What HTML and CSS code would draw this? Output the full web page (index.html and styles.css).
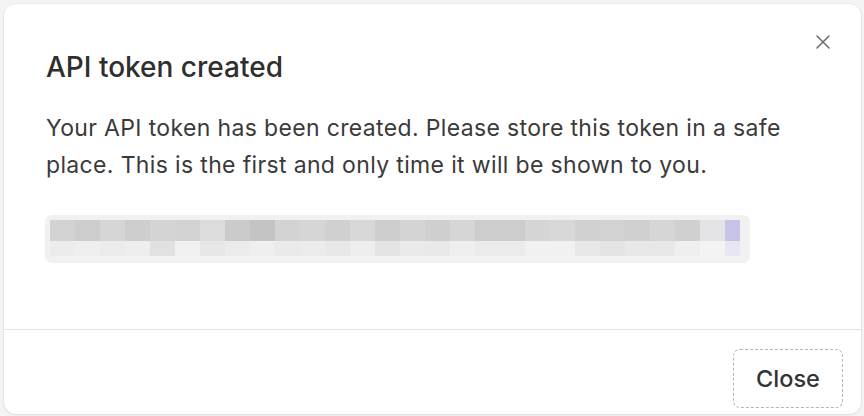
FILE: index.html
```html
<!DOCTYPE html>
<html lang="en">
<head>
<meta charset="utf-8">
<title>API token created</title>
<link rel="stylesheet" href="styles.css">
</head>
<body>
<div class="dialog">
  <button class="dismiss" aria-label="Close">
    <svg viewBox="0 0 14 14" width="14" height="14"><path d="M1 1 L13 13 M13 1 L1 13" stroke="#6b6b6b" stroke-width="1.5" stroke-linecap="round" fill="none"/></svg>
  </button>
  <div class="header">
    <h2 class="title">API token created</h2>
  </div>
  <div class="body">
    <p class="message">Your API token has been created. Please store this token in a safe place. This is the first and only time it will be shown to you.</p>
    <div class="token">
      <div class="pixels">
        <span class="d3"></span><span class="cd"></span><span class="d6"></span><span class="ce"></span><span class="d4"></span><span class="d2"></span><span class="dc"></span><span class="cb"></span><span class="c4"></span><span class="d3"></span><span class="d6"></span><span class="d0"></span><span class="d8"></span><span class="cd"></span><span class="d4"></span><span class="cf"></span><span class="d6"></span><span class="cd"></span><span class="cd"></span><span class="d5"></span><span class="d8"></span><span class="d1"></span><span class="d2"></span><span class="d0"></span><span class="d6"></span><span class="d0"></span><span class="e4"></span><span class="pu"></span>
        <span class="ec"></span><span class="ef"></span><span class="eb"></span><span class="ee"></span><span class="e1"></span><span class="f0"></span><span class="e6"></span><span class="eb"></span><span class="ef"></span><span class="ea"></span><span class="eb"></span><span class="e8"></span><span class="ee"></span><span class="e4"></span><span class="ea"></span><span class="e9"></span><span class="ef"></span><span class="eb"></span><span class="eb"></span><span class="f1"></span><span class="f1"></span><span class="e8"></span><span class="e4"></span><span class="e8"></span><span class="e8"></span><span class="ef"></span><span class="f3"></span><span class="pl"></span>
      </div>
    </div>
  </div>
  <div class="footer">
    <button class="close-btn">Close</button>
  </div>
</div>
</body>
</html>
```

FILE: styles.css
```css
* { box-sizing: border-box; }
html, body { margin: 0; padding: 0; }
body {
  background: #f4f4f4;
  font-family: Inter, "Noto Sans", "Liberation Sans", sans-serif;
  padding: 4px;
  width: 864px;
  height: 416px;
  overflow: hidden;
}
.dialog {
  position: relative;
  width: 857px;
  height: 410px;
  background: #fff;
  border-radius: 12px;
  box-shadow: 0 0 0 1px rgba(0,0,0,0.03), 0 1px 3px rgba(0,0,0,0.08);
  display: flex;
  flex-direction: column;
}
.dismiss {
  position: absolute;
  top: 31px;
  right: 31px;
  width: 14px;
  height: 14px;
  padding: 0;
  border: 0;
  background: none;
  display: flex;
}
.header { padding: 49px 42px 0; }
.title {
  margin: 0;
  font-size: 28px;
  line-height: 28px;
  font-weight: 500;
  color: #2f2f2f;
}
.body { padding: 29px 41px 66px; }
.message {
  margin: 0 0 31px;
  font-size: 23px;
  line-height: 37px;
  letter-spacing: 0.35px;
  color: #3a3a3a;
  padding-left: 1px;
}
.token {
  width: 705px;
  height: 48px;
  background: #f1f1f1;
  border-radius: 7px;
  padding: 5px 9px 7px 5px;
}
.pixels {
  display: grid;
  grid-template-columns: repeat(27, 25px) 15px;
  grid-template-rows: 21px 15px;
}
.pixels span { display: block; }
.c4 { background: #c4c4c4; } .cb { background: #cbcbcb; } .cd { background: #cdcdcd; }
.ce { background: #cecece; } .cf { background: #cfcfcf; } .d0 { background: #d0d0d0; }
.d1 { background: #d1d1d1; } .d2 { background: #d2d2d2; } .d3 { background: #d3d3d3; }
.d4 { background: #d4d4d4; } .d5 { background: #d5d5d5; } .d6 { background: #d6d6d6; }
.d8 { background: #d8d8d8; } .dc { background: #dcdcdc; } .e4 { background: #e4e4e6; }
.pu { background: #c6c3e6; }
.e1 { background: #e1e1e1; } .e6 { background: #e6e6e6; } .e8 { background: #e8e8e8; }
.e9 { background: #e9e9e9; } .ea { background: #eaeaea; } .eb { background: #ebebeb; }
.ec { background: #ececec; } .ee { background: #eeeeee; } .ef { background: #efefef; }
.f0 { background: #f0f0f0; } .f1 { background: #f1f1f1; } .f3 { background: #f3f3f3; }
.pixels .e4:nth-child(n+29) { background: #e4e4e4; }
.pl { background: #e8e6f3; }
.footer {
  border-top: 1px solid #e2e2e2;
  padding: 19px 18px 6px 0;
  display: flex;
  justify-content: flex-end;
}
.close-btn {
  width: 110px;
  height: 59px;
  border: 1px dashed #b5b5b5;
  border-radius: 7px;
  background: #fff;
  font-family: inherit;
  font-size: 23.5px;
  font-weight: 500;
  color: #333;
  padding: 0;
}
```
